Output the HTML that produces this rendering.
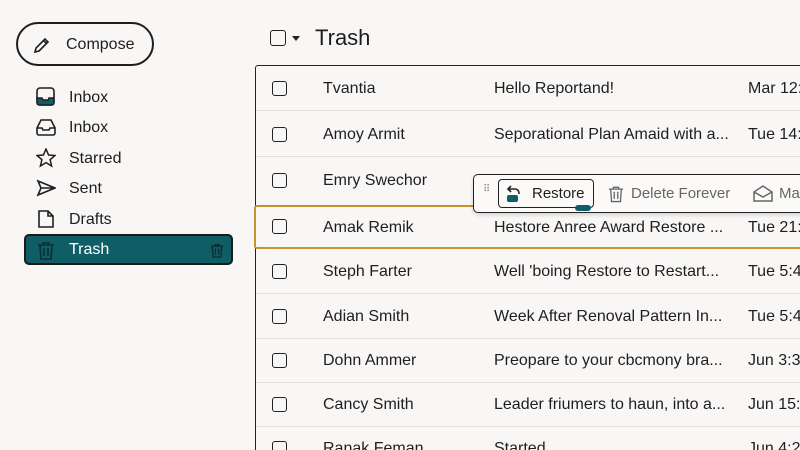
<!DOCTYPE html>
<html style="overflow:hidden;width:800px;height:450px"><head><meta charset="utf-8"><style>
*{margin:0;padding:0;box-sizing:border-box}
body{width:800px;height:450px;overflow:hidden;background:#f9f7f6;font-family:"Liberation Sans",sans-serif;color:#1e1e1e;position:relative}
.abs{position:absolute}
.compose{left:16px;top:22px;width:138px;height:44px;border:2px solid #1e1e1e;border-radius:22px;font-size:16px}
.nav{left:36px;font-size:16px;height:24px;line-height:24px}
.nav svg{position:absolute;left:0;top:2px}
.nav span{position:absolute;left:33px;top:1px}
.trash{left:24px;top:234px;width:209px;height:31px;background:#0f5e66;border:2px solid #1a1a1a;border-radius:5px;color:#fff}
.list{left:255px;top:65px;width:560px;height:400px;border:1.5px solid #222;border-radius:3px}
.row{position:absolute;left:0;width:560px;height:45px;border-bottom:1px solid #e3e1df;font-size:16px}
.row .cb{position:absolute;left:16px;top:15px;width:15px;height:15px;border:1.6px solid #222;border-radius:3px}
.row .s{position:absolute;left:67px;top:14px}
.row .m{position:absolute;left:238px;top:14px}
.row .d{position:absolute;left:492px;top:14px;white-space:nowrap}
</style></head><body>
<div class="abs compose"><svg class="abs" style="left:14px;top:11px" width="20" height="20" viewBox="0 0 20 20" fill="none" stroke="#1e1e1e" stroke-width="1.6"><path d="M3 17l1-4L13 4l3 3-9 9z M11.5 5.5l3 3"/></svg><span class="abs" style="left:48px;top:12px">Compose</span></div>

<div class="abs nav" style="top:85px"><svg width="20" height="20" viewBox="0 0 20 20"><rect x="1" y="1" width="17" height="17" rx="3" fill="none" stroke="#1e1e1e" stroke-width="1.6"/><path d="M1 11h5l1 2h5l1-2h5v5a2 2 0 0 1-2 2H3a2 2 0 0 1-2-2z" fill="#0f5e66" stroke="#1e1e1e" stroke-width="1.4"/></svg><span>Inbox</span></div>
<div class="abs nav" style="top:115px"><svg width="20" height="20" viewBox="0 0 20 20" fill="none" stroke="#1e1e1e" stroke-width="1.6"><path d="M5 3h10l4 8v5a2 2 0 0 1-2 2H3a2 2 0 0 1-2-2v-5z M1 11h5l1 2h6l1-2h5"/></svg><span>Inbox</span></div>
<div class="abs nav" style="top:146px"><svg width="20" height="20" viewBox="0 0 20 20" fill="none" stroke="#1e1e1e" stroke-width="1.5"><path d="M10 1l2.6 6 6.4.5-4.9 4.2 1.5 6.3L10 14.6 4.4 18l1.5-6.3L1 7.5 7.4 7z"/></svg><span>Starred</span></div>
<div class="abs nav" style="top:176px"><svg width="20" height="20" viewBox="0 0 20 20" fill="none" stroke="#1e1e1e" stroke-width="1.6"><path d="M2 3l17 7-17 7 3-7z M5 10h14"/></svg><span>Sent</span></div>
<div class="abs nav" style="top:207px"><svg width="20" height="20" viewBox="0 0 20 20" fill="none" stroke="#1e1e1e" stroke-width="1.6"><path d="M3 2h9l5 5v11H3z M12 2v5h5"/></svg><span>Drafts</span></div>
<div class="abs trash"><svg class="abs" style="left:11px;top:5px" width="18" height="19" viewBox="0 0 18 19" fill="none" stroke="#0a2f33" stroke-width="1.6"><path d="M1 4h16 M6 4V2h6v2 M3 4l1 14h10l1-14 M7 7v8 M11 7v8"/></svg><span class="abs" style="left:43px;top:5px;font-size:16px">Trash</span><svg class="abs" style="left:184px;top:7px" width="14" height="15" viewBox="0 0 18 19" fill="none" stroke="#0a2f33" stroke-width="1.8"><path d="M1 4h16 M6 4V2h6v2 M3 4l1 14h10l1-14 M7 7v8 M11 7v8"/></svg></div>

<div class="abs" style="left:270px;top:30px;width:16px;height:16px;border:1.6px solid #222;border-radius:3px"></div>
<div class="abs" style="left:292px;top:36px;width:0;height:0;border-left:4px solid transparent;border-right:4px solid transparent;border-top:5px solid #222"></div>
<div class="abs" style="left:315px;top:25px;font-size:22px">Trash</div>

<div class="abs list">
<div class="row" style="top:0"><div class="cb"></div><div class="s">Tvantia</div><div class="m">Hello Reportand!</div><div class="d">Mar 12:</div></div>
<div class="row" style="top:46px"><div class="cb"></div><div class="s">Amoy Armit</div><div class="m">Seporational Plan Amaid with a...</div><div class="d">Tue 14:3</div></div>
<div class="row" style="top:92px;border:none"><div class="cb"></div><div class="s">Emry Swechor</div></div>
<div class="row" style="top:139px;left:-2px;width:562px;border:2px solid #c8922c;border-radius:3px;height:44px"><div class="cb" style="top:12px;left:16px"></div><div class="s" style="top:12px">Amak Remik</div><div class="m" style="top:12px">Hestore Anree Award Restore ...</div><div class="d" style="top:12px">Tue 21:0</div></div>
<div class="row" style="top:183px"><div class="cb"></div><div class="s">Steph Farter</div><div class="m">Well 'boing Restore to Restart...</div><div class="d">Tue 5:4</div></div>
<div class="row" style="top:228px"><div class="cb"></div><div class="s">Adian Smith</div><div class="m">Week After Renoval Pattern In...</div><div class="d">Tue 5:4</div></div>
<div class="row" style="top:272px"><div class="cb"></div><div class="s">Dohn Ammer</div><div class="m">Preopare to your cbcmony bra...</div><div class="d">Jun 3:3</div></div>
<div class="row" style="top:316px"><div class="cb"></div><div class="s">Cancy Smith</div><div class="m">Leader friumers to haun, into a...</div><div class="d">Jun 15:</div></div>
<div class="row" style="top:360px"><div class="cb"></div><div class="s">Ranak Feman</div><div class="m">Started</div><div class="d">Jun 4:2</div></div>
</div>

<div class="abs" style="left:473px;top:174px;width:340px;height:39px;background:#fbfaf9;border:1.6px solid #222;border-radius:5px;box-shadow:0 2px 4px rgba(0,0,0,.15);font-size:15px">
<div class="abs" style="left:9px;top:12px;color:#888;font-size:10px;line-height:5px">⠿</div>
<div class="abs" style="left:24px;top:4px;width:96px;height:29px;border:1.6px solid #222;border-radius:4px"><svg class="abs" style="left:7px;top:4px" width="16" height="19" viewBox="0 0 16 19"><path d="M5 2L2 5l3 3 M2 5h7a4 4 0 0 1 4 4v1" fill="none" stroke="#222" stroke-width="1.6"/><rect x="1" y="11" width="11" height="7" rx="2" fill="#0f5e66"/></svg><span class="abs" style="left:33px;top:5px">Restore</span></div>
<div class="abs" style="left:101px;top:30px;width:16px;height:6px;background:#0f5e66;border-radius:3px"></div>
<svg class="abs" style="left:134px;top:10px" width="16" height="18" viewBox="0 0 18 19" fill="none" stroke="#666" stroke-width="1.5"><path d="M1 4h16 M6 4V2h6v2 M3 4l1 14h10l1-14 M7 7v8 M11 7v8"/></svg>
<span class="abs" style="left:157px;top:10px;color:#666">Delete Forever</span>
<svg class="abs" style="left:279px;top:10px" width="20" height="18" viewBox="0 0 20 18" fill="none" stroke="#666" stroke-width="1.5"><path d="M1 7l9-6 9 6v9H1z M1 7l9 5 9-5"/></svg>
<span class="abs" style="left:305px;top:10px;color:#666">Ma</span>
</div>
</body></html>
